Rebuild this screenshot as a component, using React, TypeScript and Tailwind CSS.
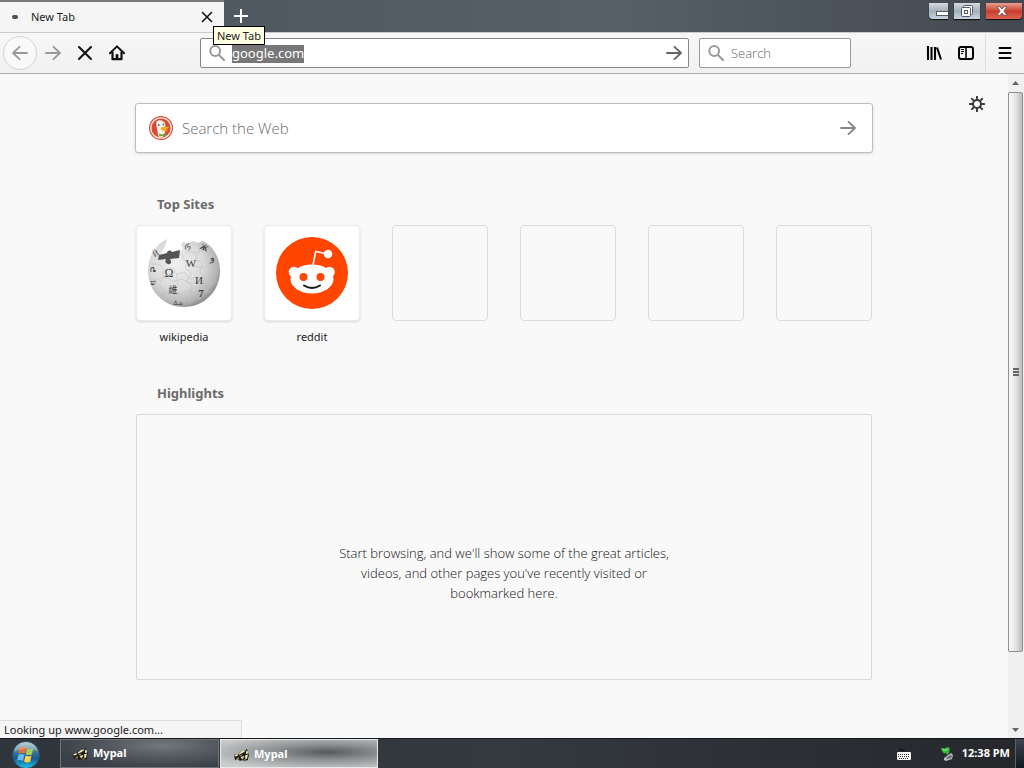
import type { ReactNode } from "react";

type IconProps = { className?: string };

const Arrow = ({ className = "" }: IconProps) => (
  <svg viewBox="0 0 16 16" className={className} fill="none" stroke="currentColor" strokeWidth="1.8" strokeLinecap="round" strokeLinejoin="round" aria-hidden="true">
    <path d="M1 8h14M8.5 1.8 15 8l-6.5 6.2" />
  </svg>
);

const Cross = ({ className = "" }: IconProps) => (
  <svg viewBox="0 0 16 16" className={className} fill="none" stroke="currentColor" strokeWidth="2.1" strokeLinecap="round" aria-hidden="true">
    <path d="M2 2l12 12M14 2 2 14" />
  </svg>
);

const Magnifier = ({ className = "" }: IconProps) => (
  <svg viewBox="0 0 16 16" className={className} fill="none" stroke="currentColor" strokeWidth="2" strokeLinecap="round" aria-hidden="true">
    <circle cx="6.2" cy="6" r="4.9" />
    <path d="M10 10l5 5" />
  </svg>
);

const HomeIcon = () => (
  <svg viewBox="0 0 16 16" className="size-4" aria-hidden="true">
    <path d="M1 8.3 8 1.4l7 6.9" fill="none" stroke="#111" strokeWidth="2" strokeLinecap="round" strokeLinejoin="round" />
    <path d="M3.5 7v7.2h9V7" fill="none" stroke="#111" strokeWidth="2.2" strokeLinejoin="round" />
    <path d="M6.6 14V9.2h2.8V14z" fill="#111" />
  </svg>
);

const LibraryIcon = () => (
  <svg viewBox="0 0 16 16" className="size-4" fill="none" stroke="#050505" strokeWidth="2.1" aria-hidden="true">
    <path d="M2 1v14M5.500 2v13M9 2v13M11 2.500l4 12" />
  </svg>
);

const SidebarIcon = () => (
  <svg viewBox="0 0 16 16" className="size-4" fill="none" stroke="#050505" aria-hidden="true">
    <rect x="1" y="2" width="14" height="12" rx="2" strokeWidth="2" />
    <path d="M8 2v12" strokeWidth="1.6" />
    <path d="M3 4.500h3M3 6.500h3M3 8.500h2" strokeWidth="1" />
  </svg>
);

const GearIcon = () => (
  <svg viewBox="0 0 16 16" className="size-4" fill="none" stroke="#3b3b40" aria-hidden="true">
    <circle cx="8" cy="8" r="4" strokeWidth="2.100" />
    <path d="M8 .8v3M8 12.200v3M.8 8h3M12.200 8h3M2.900 2.900l2 2M11.100 11.100l2 2M2.900 13.100l2-2M11.100 4.900l2-2" strokeWidth="2" strokeLinecap="round" />
  </svg>
);

const DuckLogo = () => (
  <svg viewBox="0 0 24 24" className="size-6 shrink-0" aria-hidden="true">
    <circle cx="12" cy="12" r="12" fill="#d94b32" />
    <circle cx="12" cy="12" r="10.2" fill="none" stroke="#fbe6df" strokeWidth="1.3" />
    <path d="M7.200 7.600C7 4.800 9.400 4 11.300 4.300c2.800.1 4.800 2 5 4.700l.1 5-1 5.200c-1.800 2-4.200 2.600-5.800 2C8.700 16.500 7.700 11.500 7.200 7.600z" fill="#f8f3e8" />
    <circle cx="9.700" cy="8.900" r=".9" fill="#3c5f8a" />
    <circle cx="14.200" cy="8.400" r=".8" fill="#3c5f8a" />
    <path d="M11.500 12.300c2.200-1.700 5-1.500 8.700-1.300-.7 1.600-2.600 2.100-4.100 2.500 1 .7 1.800.9 2.700.9-1.600 1.500-6.300 1.400-7.300-2.100z" fill="#f7ae18" />
    <path d="m10 17.400 3 1 3.500-1.200v3.500l-3.400-1-2.800 1z" fill="#65a541" />
  </svg>
);

const WikipediaGlobe = () => (
  <svg viewBox="0 0 74 72" className="h-[72px] w-[74px]" role="img" aria-label="Wikipedia globe">
    <defs>
      <radialGradient id="globe" cx=".4" cy=".38" r=".66">
        <stop offset="0" stopColor="#f0f0f0" />
        <stop offset=".55" stopColor="#dadada" />
        <stop offset=".85" stopColor="#b4b4b4" />
        <stop offset="1" stopColor="#858585" />
      </radialGradient>
    </defs>
    <path d="M20 2C8 8 1 20 1 34c0 20 16 36 36 36s36-16 36-36c0-13-6-23-15-29l-3-1-4 2-5-2-5 2-5-1-2 3 2 3-3 4-6 3-11 3-2-5 4-6z" fill="url(#globe)" />
    <path d="M12 18l8-2c0-2 3-4 5-1l8-2-1 8-9 1c2 3 1 6-2 5s-3-2-2-5l-8 1z" fill="#555" />
    <g fill="none" stroke="#c0c0c0" strokeWidth=".6">
      <path d="M4 27c4 1 6-1 9 1s2 5 5 5 3-3 7-2 2 5 5 6 5-3 8-1 1 5 5 6 4-3 8-1 2 5 6 5 5-3 8-2" />
      <path d="M35 18c3 2 1 5 4 7s-2 4 0 7 5 1 5 5-4 3-4 7 5 2 5 6-3 4-2 8-1 5 0 10" />
      <path d="M16 34c-2 3 2 5 0 8s-4 3-3 7 5 3 5 6-1 5 1 9M30 37c-2 4 2 5 1 9s-4 3-3 7 4 4 3 8 1 4 1 7" />
      <path d="M53 7c-3 3 1 5-1 8s-4 2-3 6 5 2 6 6-3 5-2 8 5 4 4 8-2 4-1 8-2 5-4 12" />
      <path d="M2 42c4-2 6 2 10 0s4-3 8-1 4 4 8 3 5-3 9-1 4 4 9 3 5-3 9-1 5 4 9 2 4-3 8-2" />
      <path d="M8 56c4-2 6 2 10 0s5-3 9-1 5 3 9 1 5-3 9-1 5 3 9 1 5-2 10-1M40 15c4-2 6 2 10 0s7-2 11 1M46 30c5-2 8 2 12 0s8-2 13 0" />
    </g>
    <g fill="#3c3c3c" fontFamily="Liberation Serif, serif" fontSize="11" textAnchor="middle">
      <text x="22" y="40" fontSize="12">Ω</text>
      <text x="44" y="30">W</text>
      <text x="52" y="47">И</text>
      <text x="26" y="56" fontSize="9" fontFamily="Noto Sans CJK SC, sans-serif">維</text>
      <text x="65" y="24" fontSize="10">و</text>
      <text x="9" y="19" fontSize="8" transform="rotate(-30 9 17)">Й</text>
      <text x="40" y="13" fontSize="8" transform="rotate(15 40 11)">რ</text>
      <text x="6" y="35" fontSize="8">ቤ</text>
      <text x="6" y="48" fontSize="8" fontWeight="bold">ש</text>
      <text x="57" y="13" fontSize="8" fontWeight="bold" transform="rotate(25 57 11)">Ж</text>
      <text x="54" y="60" fontWeight="bold">7</text>
      <text x="31" y="68" fontSize="6" fontFamily="DejaVu Sans, sans-serif">ᐃᓄ</text>
    </g>
  </svg>
);

const RedditLogo = () => (
  <svg viewBox="0 0 72 72" className="size-[72px]" role="img" aria-label="Reddit">
    <circle cx="36" cy="36" r="36" fill="#ff4500" />
    <path d="m37 28 2.700-13.500 12 2.500" fill="none" stroke="#fff" strokeWidth="1.600" />
    <circle cx="52" cy="17" r="4.300" fill="#fff" />
    <circle cx="18" cy="35" r="5.300" fill="#fff" />
    <circle cx="53.500" cy="35" r="5.300" fill="#fff" />
    <ellipse cx="36" cy="42" rx="21.500" ry="14.500" fill="#fff" />
    <circle cx="27.500" cy="40" r="4" fill="#ff4500" />
    <circle cx="44.500" cy="40" r="4" fill="#ff4500" />
    <path d="M28 48.500q8 5 16 0" fill="none" stroke="#151515" strokeWidth="1.900" strokeLinecap="round" />
  </svg>
);

const RaccoonIcon = () => (
  <svg viewBox="0 0 16 14" className="h-3.5 w-4 shrink-0" aria-hidden="true">
    <path d="M0 7l2-1 2 1 2-3 4-1 3-2 1 3 1 4-1 2v2l-4 1-2-1-2 1-2-2-3 1z" fill="#1d1c17" />
    <path d="M5 5.500 8 3l4-.5-3 2.300-4 2zM12 3.500l1.500-1 .5 3-2 .5zM0 7.500 3 6l1 1.500-2 1zM6.500 9l4-1-2 3.500zM11 7.500l3-1-1 4-1.500 1z" fill="#f1e8b9" />
    <path d="m5 7.500 4-1-2 1.700zM2 11l3-2-.5 2.300zM9 12l3-1-1.500 1.800z" fill="#b9a14c" />
  </svg>
);

const WindowsOrb = () => (
  <svg viewBox="0 0 28 28" className="size-7" aria-hidden="true">
    <defs>
      <linearGradient id="orb" x1="0" y1="0" x2="0" y2="1">
        <stop offset="0" stopColor="#a8c4ce" />
        <stop offset=".36" stopColor="#477c96" />
        <stop offset=".62" stopColor="#125b91" />
        <stop offset="1" stopColor="#24c6ee" />
      </linearGradient>
    </defs>
    <circle cx="14" cy="14" r="13.500" fill="url(#orb)" stroke="#2c5065" />
    <path d="M8 6.500q3-1.500 6 .3l-1.300 6q-3-1.700-6-.3z" fill="#f16b38" />
    <path d="M15 7.200q3 1.600 6.200.3l-1.400 6q-3 1.300-6-.3z" fill="#a3cf52" />
    <path d="M6.400 13.700q3-1.300 6 .3l-1.400 6q-3-1.700-6-.3z" fill="#67b9ed" />
    <path d="M13.500 14.500q3 1.500 6 .3l-1.400 6q-3 1.300-6-.3z" fill="#ffd04a" />
    <path d="M2 11C3 4 8 1 14 1s11 4 12 9C18 6 9 7 2 11z" fill="#fff" opacity=".25" />
  </svg>
);

const KeyboardIcon = () => (
  <svg viewBox="0 0 16 14" className="h-3.5 w-4" aria-hidden="true">
    <path d="M4 1v2h4v2" fill="none" stroke="#111" />
    <rect x="1" y="5" width="14" height="8" rx="1" fill="#f5f5f5" />
    <path d="M2 7.500h12M2 9.500h12" stroke="#29292c" strokeDasharray="1 1" />
    <path d="M3 11.500h10" stroke="#29292c" strokeDasharray="1 1" />
  </svg>
);

const EjectIcon = () => (
  <svg viewBox="0 0 14 16" className="h-4 w-3.5" aria-hidden="true">
    <path d="m4 12 7-5 2 2-1 4-6 2-2-1z" fill="#b9bdbc" />
    <path d="m6 12 5-3 1 1-1 2-4 1z" fill="#606565" />
    <path d="m1 2 4 .5L7 1l3 1-1 5-2 2-1-2-2 .5L2 5z" fill="#36b63c" />
    <path d="m2 2.500 3 1 3-1-2 2.500-3-.5z" fill="#84e273" />
  </svg>
);

const ToolButton = ({ label, className = "", children }: { label: string; className?: string; children: ReactNode }) => (
  <button type="button" aria-label={label} className={`flex h-8 w-8 items-center justify-center ${className}`}>
    {children}
  </button>
);

const sites: { name: string; logo: ReactNode }[] = [
  { name: "wikipedia", logo: <WikipediaGlobe /> },
  { name: "reddit", logo: <RedditLogo /> },
];

function TitleBar() {
  return (
    <header className="flex h-8 shrink-0 bg-linear-to-r from-[#4d555e] via-[#566066] via-60% to-[#434950]">
      <div className="flex w-56 items-center border-t-2 border-[#77777a] bg-[#f5f5f5] pr-[7px] pl-3">
        <span className="h-1 w-1.5 rounded-full bg-[#505050]" />
        <span className="ml-[13px] flex-1 text-[11px]">New Tab</span>
        <button type="button" aria-label="Close tab" className="flex size-5 items-center justify-center text-[#111]">
          <Cross className="size-3" />
        </button>
      </div>
      <div className="relative flex">
        <button type="button" aria-label="Open a new tab" className="flex w-[34px] items-center justify-center">
          <svg viewBox="0 0 14 14" className="size-3.5" stroke="#fff" strokeWidth="2" strokeLinecap="round" aria-hidden="true">
            <path d="M7 0v14M0 7h14" />
          </svg>
        </button>
        <div role="tooltip" className="absolute top-[26px] -left-[11px] z-10 flex h-[19px] items-center border border-black bg-[#ffffe1] px-[3px] pt-px text-[11px] whitespace-nowrap">
          New Tab
        </div>
      </div>
      <div className="ml-auto flex items-start gap-1.5 pt-[3px]">
        <button type="button" aria-label="Minimize" className="flex h-4 w-[19px] items-center justify-end rounded-bl-sm bg-linear-to-b from-[#d6dae0] via-[#a5afbc] to-[#c9d4e1] shadow-[0_1px_1px_#111]">
          <svg viewBox="0 0 12 6" className="mt-1.5 h-1.5 w-3" aria-hidden="true">
            <rect x=".5" y=".5" width="12" height="4" fill="#fff" stroke="#525a64" />
          </svg>
        </button>
        <button type="button" aria-label="Restore" className="flex h-4 w-[26px] items-center justify-center bg-linear-to-b from-[#d6dae0] via-[#a5afbc] to-[#c9d4e1] shadow-[0_1px_1px_#111]">
          <svg viewBox="0 0 14 13" className="h-[13px] w-3.5" fill="#f7f7f7" stroke="#525a64" aria-hidden="true">
            <rect x="3.500" y=".5" width="9" height="9" rx="1" />
            <rect x="1.500" y="2.500" width="9" height="9" rx="1" />
            <rect x="4.500" y="5.500" width="3" height="3" />
          </svg>
        </button>
        <button type="button" aria-label="Close" className="mr-0.5 flex h-4 w-9 items-center justify-center rounded-br-sm bg-linear-to-b from-[#e8a092] via-[#c93d2c] to-[#dc6350] pr-1 shadow-[0_1px_1px_#111]">
          <svg viewBox="0 0 12 10" className="h-2.5 w-3" aria-hidden="true">
            <path d="M1 .7h3l2 2.300 2-2.300h3L7.800 5 11 9.300H8L6 7 4 9.300H1L4.200 5z" fill="#fff" stroke="#65504e" strokeWidth=".8" />
          </svg>
        </button>
      </div>
    </header>
  );
}

function Toolbar() {
  return (
    <nav aria-label="Navigation" className="flex h-[42px] shrink-0 items-center border-t border-b border-t-[#c9cccd] border-b-[#aaa] bg-linear-to-b from-[#f7f7f7] to-[#f1f1f1] pr-[3px] pl-[3px]">
      <button type="button" aria-label="Back" className="flex size-[34px] items-center justify-center rounded-full border border-[#d3d3d3] bg-[#f9f9f9] text-[#999]">
        <Arrow className="size-4 rotate-180" />
      </button>
      <ToolButton label="Forward" className="text-[#999]"><Arrow className="size-4" /></ToolButton>
      <ToolButton label="Stop" className="text-[#111]"><Cross className="size-4" /></ToolButton>
      <ToolButton label="Home"><HomeIcon /></ToolButton>
      <div className="ml-[67px] flex h-[30px] flex-1 items-center rounded-xs border border-[#85878a] bg-white pr-1.5 pl-2">
        <Magnifier className="size-4 text-[#999]" />
        <input aria-label="Address" defaultValue="google.com" className="mt-0.5 ml-[7px] h-[18px] bg-[#777] text-[13px] text-white outline-none field-sizing-content" />
        <button type="button" aria-label="Go" className="ml-auto text-[#666]"><Arrow className="size-4" /></button>
      </div>
      <label className="ml-2.5 flex h-[30px] w-[152px] items-center rounded-xs border border-[#999] bg-white px-2">
        <Magnifier className="size-4 shrink-0 text-[#999]" />
        <input aria-label="Search" placeholder="Search" className="mt-0.5 ml-[7px] w-full min-w-0 font-['Open_Sans',sans-serif] text-[13px] font-light outline-none placeholder:text-[#666]" />
      </label>
      <ToolButton label="Library" className="ml-[67px]"><LibraryIcon /></ToolButton>
      <ToolButton label="Sidebars"><SidebarIcon /></ToolButton>
      <div className="ml-[3px] flex h-9 items-center border-l border-[#ddd] pl-[3px]">
        <ToolButton label="Menu">
          <svg viewBox="0 0 14 14" className="size-3.5" stroke="#050505" strokeWidth="2" strokeLinecap="round" aria-hidden="true">
            <path d="M1.500 2h11M1.500 7h11M1.500 12h11" />
          </svg>
        </ToolButton>
      </div>
    </nav>
  );
}

function Scrollbar() {
  return (
    <div className="flex w-4 shrink-0 flex-col bg-[#f0f0f0] pr-px">
      <button type="button" aria-label="Scroll up" className="flex h-[18px] items-center justify-center">
        <svg viewBox="0 0 7 4" className="h-1 w-[7px]" fill="#666" aria-hidden="true"><path d="m0 4 3.500-4L7 4z" /></svg>
      </button>
      <div className="flex grow-[87] basis-0 flex-col items-center justify-center gap-px rounded-xs border border-[#8f8f8f] bg-linear-to-r from-[#fafafa] via-[#e5e5e5] to-[#bdbdbd]">
        <span className="h-0.5 w-1.5 bg-[#666]" />
        <span className="h-0.5 w-1.5 bg-[#666]" />
        <span className="h-0.5 w-1.5 bg-[#666]" />
      </div>
      <div className="grow-[11] basis-0" />
      <button type="button" aria-label="Scroll down" className="flex h-4 items-center justify-center">
        <svg viewBox="0 0 7 4" className="h-1 w-[7px]" fill="#666" aria-hidden="true"><path d="M0 0h7L3.500 4z" /></svg>
      </button>
    </div>
  );
}

function NewTabPage() {
  return (
    <main className="relative flex-1 bg-[#f9f9f9] pt-[29px]">
      <button type="button" aria-label="Customize page" className="absolute top-[22px] right-[23px]"><GearIcon /></button>
      <div className="mx-auto max-w-[738px]">
        <form className="flex h-[50px] items-center rounded-[3px] border border-[#bdbdbd] bg-white pr-4 pl-[13px] shadow-sm">
          <DuckLogo />
          <input aria-label="Search the Web" placeholder="Search the Web" className="ml-[9px] min-w-0 flex-1 font-['Open_Sans',sans-serif] text-[15px] font-light outline-none placeholder:text-[#6b6b6b]" />
          <button type="button" aria-label="Submit search" className="text-[#858585]"><Arrow className="size-4" /></button>
        </form>
        <div className="px-px">
          <section>
            <h2 className="mt-[41px] ml-[21px] text-[13px] leading-5 font-bold text-[#6b6b6b]">Top Sites</h2>
            <ul className="mt-[11px] grid grid-cols-6 gap-8">
              {sites.map((site) => (
                <li key={site.name}>
                  <a href={`#${site.name}`} className="block text-center">
                    <span className="flex h-24 items-center justify-center rounded-sm border border-[#ececec] bg-white shadow-sm">{site.logo}</span>
                    <span className="mt-1.5 block text-[11px] leading-5">{site.name}</span>
                  </a>
                </li>
              ))}
              {[3, 4, 5, 6].map((slot) => (
                <li key={slot} className="h-24 rounded-sm border border-[#dcdcdc]" />
              ))}
            </ul>
          </section>
          <section>
            <h2 className="mt-9 ml-[21px] text-[13px] leading-5 font-bold text-[#6b6b6b]">Highlights</h2>
            <div className="mt-[11px] flex h-[266px] justify-center rounded-xs border border-[#d9d9d9] pt-32">
              <p className="w-[350px] text-center font-['Open_Sans',sans-serif] text-[13px] leading-5 font-light text-[#111]">
                Start browsing, and we'll show some of the great articles, videos, and other pages you've recently visited or bookmarked here.
              </p>
            </div>
          </section>
        </div>
      </div>
      <div role="status" className="absolute bottom-0 left-0 h-[18px] w-[242px] border-t border-r border-[#dcdcdc] bg-[#f5f5f5] pl-1 text-[11px] leading-[18px]">
        Looking up www.google.com...
      </div>
    </main>
  );
}

function Taskbar() {
  return (
    <footer className="flex h-[30px] shrink-0 items-center border-t border-[#15171a] bg-linear-to-r from-[#30353b] via-[#343940] to-[#25272b] text-[11px] font-bold text-white">
      <button type="button" aria-label="Start" className="flex h-full w-[60px] items-start overflow-hidden pt-0.5 pl-3"><WindowsOrb /></button>
      <button type="button" className="flex h-[29px] w-[159px] items-center gap-1 border border-[#707579] bg-[radial-gradient(ellipse_at_65%_20%,#73787c,#555b60_35%,#394047_75%)] pl-3">
        <RaccoonIcon />Mypal
      </button>
      <button type="button" className="ml-px flex h-[29px] w-[158px] items-center gap-1 border border-[#e9e9e9] bg-[radial-gradient(ellipse_at_68%_45%,#55595d,#8c8f91_35%,#c9cbcc_85%)] pt-0.5 pl-[13px]">
        <RaccoonIcon />Mypal
      </button>
      <div className="ml-auto flex h-full items-center">
        <KeyboardIcon />
        <span className="ml-7"><EjectIcon /></span>
        <time className="ml-2">12:38 PM</time>
        <button type="button" aria-label="Show desktop" className="ml-[5px] h-full w-[9px] border-l border-[#596069] bg-linear-to-b from-[#40464f] to-[#101820]" />
      </div>
    </footer>
  );
}

export default function App() {
  return (
    <div className="flex min-h-screen flex-col bg-[#f9f9f9] font-['Noto_Sans','Noto_Sans_CJK_SC',sans-serif] text-[#222]">
      <TitleBar />
      <Toolbar />
      <div className="flex flex-1">
        <NewTabPage />
        <Scrollbar />
      </div>
      <Taskbar />
    </div>
  );
}
